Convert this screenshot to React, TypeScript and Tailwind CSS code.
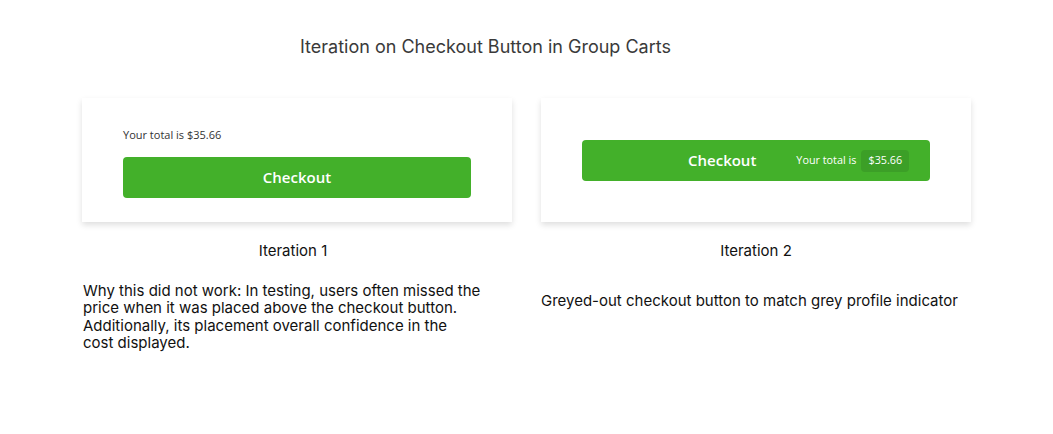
import React from "react";

const open = { fontFamily: '"Open Sans", "Noto Sans", sans-serif' };
const inter = { fontFamily: 'Inter, "Noto Sans", sans-serif' };

export default function App() {
  return (
    <div className="w-[1053px] h-[434px] bg-white overflow-hidden" style={inter}>
      <div className="pt-[36px] pl-[300px] h-[98px]">
        <h1 className="text-[18px] leading-[22px] text-[#3a3a3a]">
          Iteration on Checkout Button in Group Carts
        </h1>
      </div>
      <div className="flex pl-[82px] gap-[29px]">
        <div className="flex flex-col">
          <div
            className="w-[430px] h-[124px] bg-white shadow-[0_3px_6px_rgba(0,0,0,0.13)] pl-[41px] pt-[30px]"
            style={open}
          >
            <div className="text-[11px] leading-[14px] text-[#333]">Your total is $35.66</div>
            <div className="mt-[15px] w-[348px] h-[41px] rounded-[4px] bg-[#43b02a] flex items-center justify-center text-white text-[15px] font-semibold">
              Checkout
            </div>
          </div>
          <div className="text-center text-[15px] leading-[18px] text-[#111] mt-[20px] pr-[8px]">Iteration 1</div>
          <div className="mt-[22px] pl-[1px] text-[15px] leading-[17.3px] text-[#111]">
            Why this did not work: In testing, users often missed the
            <br />
            price when it was placed above the checkout button.
            <br />
            Additionally, its placement overall confidence in the
            <br />
            cost displayed.
          </div>
        </div>
        <div className="flex flex-col">
          <div
            className="w-[430px] h-[124px] bg-white shadow-[0_3px_6px_rgba(0,0,0,0.13)] pl-[41px] pt-[42px]"
            style={open}
          >
            <div className="w-[348px] h-[41px] rounded-[4px] bg-[#43b02a] flex items-center pl-[106px] text-white">
              <span className="text-[15px] font-semibold">Checkout</span>
              <span className="ml-[40px] text-[10.8px]">Your total is</span>
              <span className="ml-[5px] w-[48px] h-[22px] rounded-[4px] bg-[#3c9f27] flex items-center justify-center text-[10.8px]">
                $35.66
              </span>
            </div>
          </div>
          <div className="text-center text-[15px] leading-[18px] text-[#111] mt-[20px]">Iteration 2</div>
          <div className="mt-[32px] text-[15px] leading-[17.3px] text-[#111]">
            Greyed-out checkout button to match grey profile indicator
          </div>
        </div>
      </div>
    </div>
  );
}
